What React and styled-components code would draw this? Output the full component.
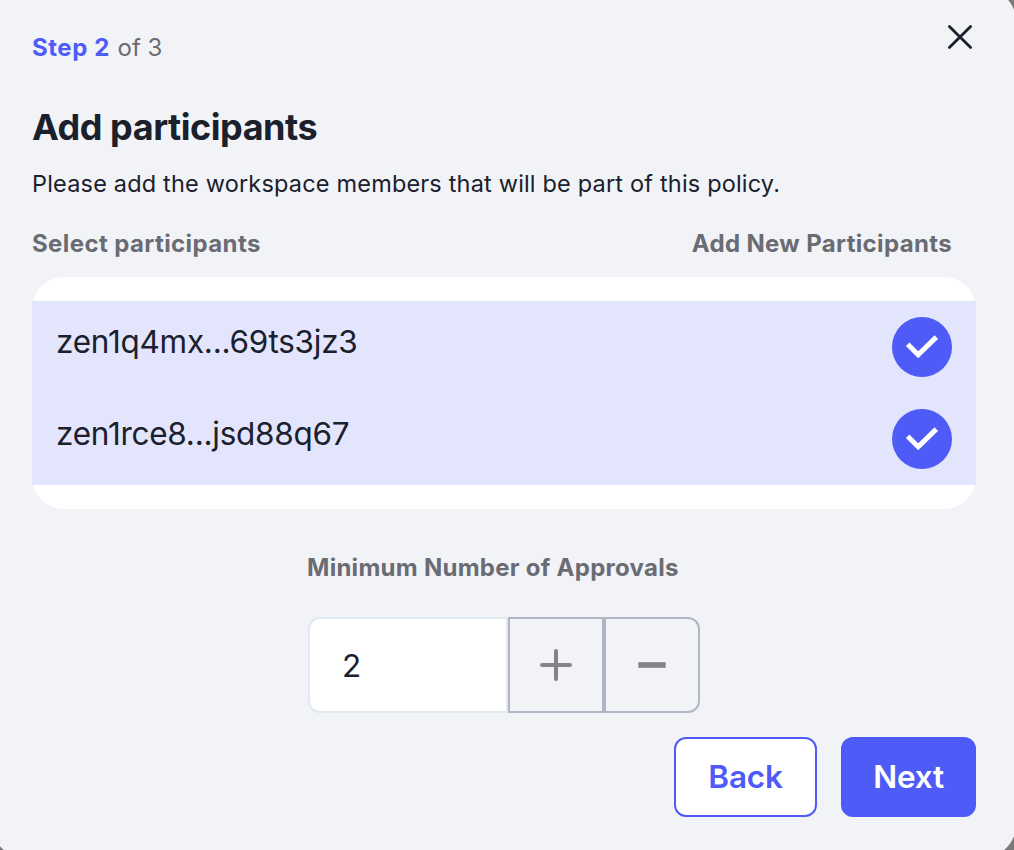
import React, { useState } from "react";
import styled, { createGlobalStyle } from "styled-components";

const GlobalStyle = createGlobalStyle`
  * { box-sizing: border-box; }
  body { margin: 0; background: #7a7a7b; overflow: hidden; }
  button, input { font: inherit; margin: 0; }
  h1, p { margin: 0; }
`;

const Backdrop = styled.div`
  height: 850px;
  overflow: hidden;
  display: flex;
  background: #7a7a7b;
  font-family: Inter, "Liberation Sans", sans-serif;
`;

const Modal = styled.section`
  flex: none;
  width: 1024px;
  height: 868px;
  margin: -11px 0 0 -8px;
  padding: 32px 40px 40px;
  border-radius: 32px;
  background: #f1f3f7;
  color: #1a202c;
  display: flex;
  flex-direction: column;
`;

const Header = styled.header`
  display: flex;
  justify-content: space-between;
  align-items: flex-start;
  height: 80px;
`;

const StepText = styled.p`
  padding-top: 9px;
  font-size: 24px;
  line-height: 36px;
  letter-spacing: 0;
  color: #6a6b73;
`;

const StepCurrent = styled.strong`
  margin-right: 1px;
  font-weight: 700;
  letter-spacing: 0.55px;
  color: #4e5bf7;
`;

const CloseButton = styled.button`
  width: 32px;
  height: 32px;
  padding: 0;
  border: 0;
  background: none;
  color: #1a202c;
  svg { display: block; }
`;

const Title = styled.h1`
  margin-top: 4px;
  font-size: 36px;
  line-height: 44px;
  font-weight: 700;
  letter-spacing: -0.46px;
`;

const Description = styled.p`
  margin-top: 17px;
  font-size: 23.5px;
  line-height: 36px;
  letter-spacing: 0.18px;
`;

const LabelRow = styled.div`
  display: flex;
  justify-content: space-between;
  margin-top: 24px;
  padding-right: 24px;
`;

const Label = styled.span`
  font-size: 24px;
  line-height: 36px;
  font-weight: 700;
  letter-spacing: ${({ $spacing }) => $spacing || "0.4px"};
  color: #6a6b73;
`;

const ParticipantList = styled.div`
  margin-top: 15px;
  padding: 24px 0;
  border-radius: 32px;
  background: #fff;
`;

const Participant = styled.div`
  display: flex;
  justify-content: space-between;
  height: 92px;
  padding: 16px 24px;
  background: #e3e5fd;
`;

const Address = styled.span`
  font-size: 31.5px;
  line-height: 50px;
  letter-spacing: -0.26px;
`;

const CheckBadge = styled.span`
  width: 60px;
  height: 60px;
  border-radius: 50%;
  background: #4e5bf7;
  svg { display: block; }
`;

const Approvals = styled.div`
  display: flex;
  flex-direction: column;
  width: 394px;
  margin: 41px 0 0 275px;
`;

const Stepper = styled.div`
  display: flex;
  margin: 31px 0 0 1px;
  height: 96px;
`;

const CountInput = styled.input`
  width: 200px;
  padding: 0 32px;
  border: 2px solid #e2e8f0;
  border-radius: 12px 0 0 12px;
  background: #fff;
  color: #1a202c;
  font-size: 31.5px;
  outline: 0;
`;

const StepButton = styled.button`
  width: 96px;
  padding: 0;
  display: flex;
  align-items: center;
  justify-content: center;
  border: 2px solid #b4b4c7;
  border-radius: ${({ $last }) => ($last ? "0 12px 12px 0" : "0")};
  background: #f1f3f7;
  color: #838489;
`;

const Actions = styled.footer`
  display: flex;
  justify-content: flex-end;
  gap: 24px;
  margin-top: 24px;
`;

const ActionButton = styled.button`
  width: ${({ $primary }) => ($primary ? "135px" : "143px")};
  height: 80px;
  padding: 0;
  border: 2px solid #4e5bf7;
  border-radius: 12px;
  background: ${({ $primary }) => ($primary ? "#4e5bf7" : "#fff")};
  color: ${({ $primary }) => ($primary ? "#fff" : "#4e5bf7")};
  font-size: 31.5px;
  font-weight: 600;
  letter-spacing: -0.2px;
  line-height: 40px;
`;

const participants = ["zen1q4mx...69ts3jz3", "zen1rce8...jsd88q67"];

export default function App() {
  const [count, setCount] = useState(2);
  return (
    <>
      <GlobalStyle />
      <Backdrop>
        <Modal>
          <Header>
            <StepText>
              <StepCurrent>Step 2</StepCurrent> of 3
            </StepText>
            <CloseButton aria-label="Close">
              <svg width="32" height="32" viewBox="0 0 32 32" fill="none" stroke="currentColor" strokeWidth="2.8" strokeLinecap="round">
                <path d="M5.4 5.4 26.6 26.6M26.6 5.4 5.4 26.6" />
              </svg>
            </CloseButton>
          </Header>
          <Title>Add participants</Title>
          <Description>Please add the workspace members that will be part of this policy.</Description>
          <LabelRow>
            <Label>Select participants</Label>
            <Label $spacing="0.35px">Add New Participants</Label>
          </LabelRow>
          <ParticipantList>
            {participants.map((address) => (
              <Participant key={address}>
                <Address>{address}</Address>
                <CheckBadge>
                  <svg width="60" height="60" viewBox="0 0 60 60" fill="none" stroke="#fff" strokeWidth="5">
                    <path d="M15.7 27.2 26.2 37.7 44.3 20.1" />
                  </svg>
                </CheckBadge>
              </Participant>
            ))}
          </ParticipantList>
          <Approvals>
            <Label $spacing="0.27px">Minimum Number of Approvals</Label>
            <Stepper>
              <CountInput value={count} readOnly aria-label="Approvals" />
              <StepButton aria-label="Increase" onClick={() => setCount(count + 1)}>
                <svg width="34" height="34" viewBox="0 0 34 34" fill="none" stroke="currentColor" strokeWidth="4" strokeLinecap="round">
                  <path d="M17 3V31M3 17H31" />
                </svg>
              </StepButton>
              <StepButton $last aria-label="Decrease" onClick={() => setCount(count - 1)}>
                <svg width="34" height="34" viewBox="0 0 34 34" fill="none" stroke="currentColor" strokeWidth="5.6">
                  <path d="M3.3 17H30.7" />
                </svg>
              </StepButton>
            </Stepper>
          </Approvals>
          <Actions>
            <ActionButton>Back</ActionButton>
            <ActionButton $primary>Next</ActionButton>
          </Actions>
        </Modal>
      </Backdrop>
    </>
  );
}
